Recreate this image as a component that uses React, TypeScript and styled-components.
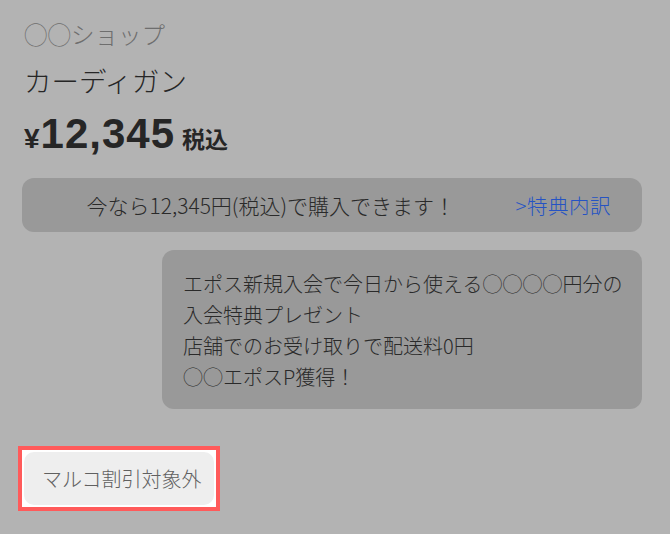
import React from "react";
import styled, { createGlobalStyle } from "styled-components";

const GlobalStyle = createGlobalStyle`
  html, body { margin: 0; padding: 0; background: #b3b3b3; }
  body { font-family: "Noto Sans CJK JP", "Noto Sans", sans-serif; }
  * { box-sizing: border-box; }
`;

const Page = styled.div`
  width: 670px;
  height: 534px;
  overflow: hidden;
  background: #b3b3b3;
  padding: 19px 28px 0 22px;
  display: flex;
  flex-direction: column;
`;

const ShopName = styled.div`
  padding-left: 2px;
  font-size: 23.5px;
  font-weight: 300;
  line-height: 30px;
  color: #6e6e6e;
  white-space: nowrap;
`;

const Title = styled.h1`
  margin: 13px 0 0;
  padding-left: 2px;
  font-size: 27.5px;
  line-height: 36px;
  font-weight: 300;
  color: #262626;
  white-space: nowrap;
`;

const PriceRow = styled.div`
  margin-top: 16px;
  padding-left: 2px;
  display: flex;
  align-items: baseline;
  color: #262626;
  height: 40px;
  line-height: 40px;
`;

const Yen = styled.span`
  font-family: "Liberation Sans", "Noto Sans CJK JP", sans-serif;
  font-weight: 700;
  font-size: 28px;
`;

const Amount = styled.span`
  font-family: "Liberation Sans", "Noto Sans CJK JP", sans-serif;
  font-weight: 700;
  font-size: 42px;
  letter-spacing: 1px;
  margin-left: 1px;
`;

const TaxLabel = styled.span`
  font-weight: 700;
  font-size: 23px;
  margin-left: 7px;
`;

const OfferBar = styled.div`
  margin-top: 24px;
  height: 54px;
  border-radius: 12px;
  background: #999999;
  display: flex;
  align-items: center;
  gap: 26px;
  padding: 0 31px 0 30px;
  font-size: 21px;
  font-weight: 300;
  white-space: nowrap;
`;

const OfferText = styled.span`
  flex: 1;
  text-align: center;
  color: #2a2a2a;
`;

const OfferLink = styled.a`
  color: #2553c4;
  text-decoration: none;
  font-size: 20.5px;
  letter-spacing: 0.5px;
`;

const BenefitCard = styled.div`
  margin-top: 18px;
  margin-left: auto;
  width: 480px;
  border-radius: 12px;
  background: #999999;
  padding: 18px 19px 17px 21px;
  color: #2a2a2a;
  font-size: 20px;
  font-weight: 300;
  line-height: 31px;
`;

const BenefitLine = styled.div`
  white-space: nowrap;
`;

const Spotlight = styled.div`
  margin-top: 37px;
  margin-left: -4px;
  align-self: flex-start;
  border: 4px solid #ff5a5a;
  background: #ffffff;
  padding: 2px;
`;

const Tag = styled.div`
  height: 53px;
  padding: 0 12px 0 18px;
  border-radius: 10px;
  background: #eeeeee;
  color: #606060;
  font-size: 20px;
  font-weight: 300;
  display: flex;
  align-items: center;
  justify-content: center;
  white-space: nowrap;
`;

const benefits = [
  "エポス新規入会で今日から使える◯◯◯◯円分の",
  "入会特典プレゼント",
  "店舗でのお受け取りで配送料0円",
  "◯◯エポスP獲得！",
];

export default function App() {
  return (
    <>
      <GlobalStyle />
      <Page>
        <ShopName>◯◯ショップ</ShopName>
        <Title>カーディガン</Title>
        <PriceRow>
          <Yen>¥</Yen>
          <Amount>12,345</Amount>
          <TaxLabel>税込</TaxLabel>
        </PriceRow>
        <OfferBar>
          <OfferText>今なら12,345円(税込)で購入できます！</OfferText>
          <OfferLink href="#">&gt;特典内訳</OfferLink>
        </OfferBar>
        <BenefitCard>
          {benefits.map((b) => (
            <BenefitLine key={b}>{b}</BenefitLine>
          ))}
        </BenefitCard>
        <Spotlight>
          <Tag>マルコ割引対象外</Tag>
        </Spotlight>
      </Page>
    </>
  );
}
